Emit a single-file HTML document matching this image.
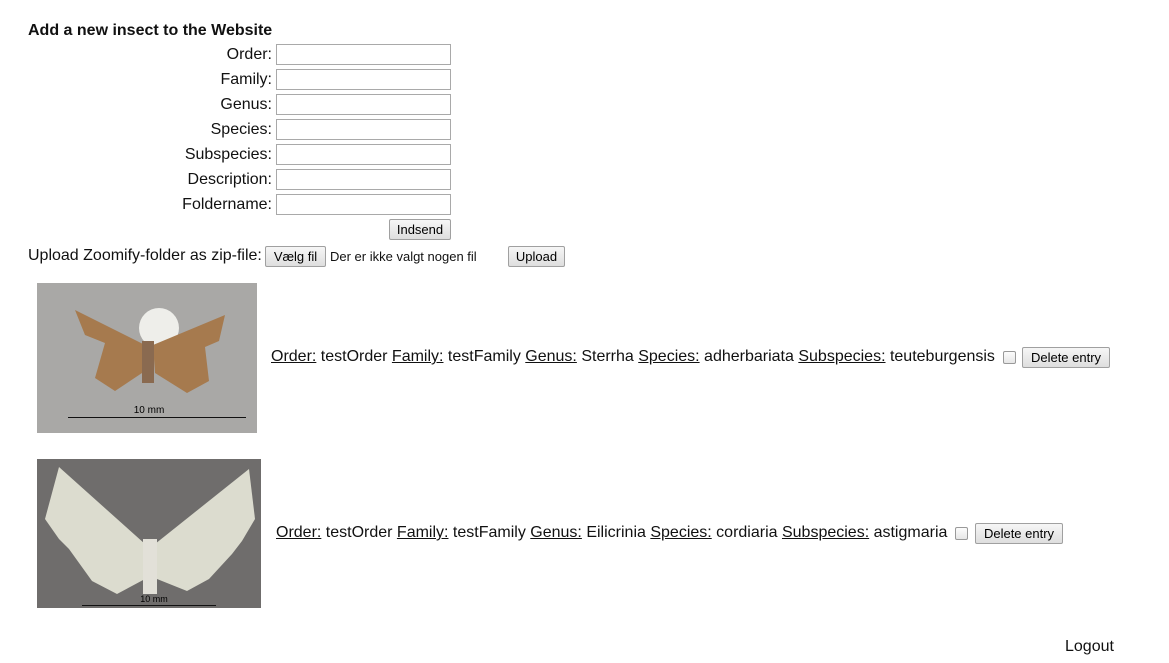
<!DOCTYPE html>
<html><head><meta charset="utf-8"><style>
body{margin:0;width:1169px;height:663px;background:#fff;font-family:"Liberation Sans",Arial,sans-serif;font-size:16px;color:#111;position:relative;overflow:hidden}
.a{position:absolute;white-space:nowrap}
.lbl{position:absolute;right:897px;line-height:20px}
.inp{position:absolute;left:276px;width:173px;height:19px;border:1px solid #a9a9a9;background:#fff}
.btn{position:absolute;height:19px;border:1px solid #a0a0a0;border-radius:2px;background:linear-gradient(#f6f6f6,#dedede);font-size:13px;line-height:19px;text-align:center;color:#000}
.cb{position:absolute;width:11px;height:11px;border:1px solid #999;border-radius:2px;background:linear-gradient(#fcfcfc,#e6e6e6)}
u{text-decoration:underline}
</style></head><body>
<div class="a" style="left:28px;top:21px;font-weight:bold;line-height:20px">Add a new insect to the Website</div>
<div class="lbl" style="top:45px">Order:</div><div class="inp" style="top:44px"></div>
<div class="lbl" style="top:70px">Family:</div><div class="inp" style="top:69px"></div>
<div class="lbl" style="top:95px">Genus:</div><div class="inp" style="top:94px"></div>
<div class="lbl" style="top:120px">Species:</div><div class="inp" style="top:119px"></div>
<div class="lbl" style="top:145px">Subspecies:</div><div class="inp" style="top:144px"></div>
<div class="lbl" style="top:170px">Description:</div><div class="inp" style="top:169px"></div>
<div class="lbl" style="top:195px">Foldername:</div><div class="inp" style="top:194px"></div>
<div class="btn" style="left:389px;top:219px;width:60px">Indsend</div>
<div class="a" style="left:28px;top:246px;line-height:20px">Upload Zoomify-folder as zip-file:</div>
<div class="btn" style="left:265px;top:246px;width:59px">Vælg fil</div>
<div class="a" style="left:330px;top:247px;font-size:13px;line-height:20px">Der er ikke valgt nogen fil</div>
<div class="btn" style="left:508px;top:246px;width:55px">Upload</div>

<svg class="a" style="left:37px;top:283px" width="220" height="150">
<rect width="220" height="150" fill="#a9a8a6"/>
<circle cx="122" cy="45" r="20" fill="#eeeeea"/>
<path d="M108 62 L38 27 L48 52 L68 60 L58 95 L78 108 L105 90 Z" fill="#a67a4e"/>
<path d="M116 62 L188 32 L182 58 L168 64 L172 98 L150 110 L118 90 Z" fill="#a67a4e"/>
<rect x="105" y="58" width="12" height="42" fill="#8a6a50"/>
<text x="112" y="130" font-size="10" text-anchor="middle" font-family="Liberation Sans,sans-serif">10 mm</text>
<rect x="31" y="134" width="178" height="1" fill="#111"/>
</svg>
<div class="a" style="left:271px;top:347px;line-height:20px"><u>Order:</u> testOrder <u>Family:</u> testFamily <u>Genus:</u> Sterrha <u>Species:</u> adherbariata <u>Subspecies:</u> teuteburgensis</div>
<div class="cb" style="left:1003px;top:351px"></div>
<div class="btn" style="left:1022px;top:347px;width:86px">Delete entry</div>

<svg class="a" style="left:37px;top:459px" width="224" height="149">
<rect width="224" height="149" fill="#6f6d6c"/>
<path d="M108 85 L22 8 L8 60 L22 80 L32 90 L55 122 L80 135 L108 120 Z" fill="#dcdccf"/>
<path d="M118 85 L212 10 L218 60 L205 82 L195 95 L172 120 L150 132 L120 120 Z" fill="#dcdccf"/>
<rect x="106" y="80" width="14" height="55" fill="#e2e0d8"/>
<text x="117" y="143" font-size="9" text-anchor="middle" font-family="Liberation Sans,sans-serif">10 mm</text>
<rect x="45" y="146" width="134" height="1" fill="#111"/>
</svg>
<div class="a" style="left:276px;top:523px;line-height:20px"><u>Order:</u> testOrder <u>Family:</u> testFamily <u>Genus:</u> Eilicrinia <u>Species:</u> cordiaria <u>Subspecies:</u> astigmaria</div>
<div class="cb" style="left:955px;top:527px"></div>
<div class="btn" style="left:975px;top:523px;width:86px">Delete entry</div>

<div class="a" style="left:1065px;top:637px;line-height:20px">Logout</div>
</body></html>
